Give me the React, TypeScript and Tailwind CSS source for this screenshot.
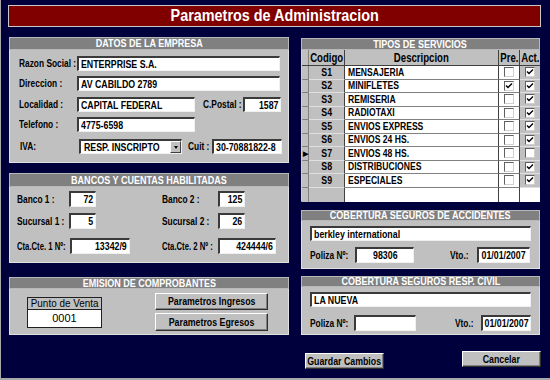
import React from "react";

const font = "font-['Liberation_Sans',Arial,sans-serif]";

// narrowed text: the original uses a condensed bold face
function T({
  children,
  o = "origin-left",
  s = "scale-x-[0.78]",
}: {
  children: React.ReactNode;
  o?: string;
  s?: string;
}) {
  return <span className={`inline-block whitespace-nowrap ${o} ${s}`}>{children}</span>;
}

function Header({ title, h }: { title: string; h: string }) {
  return (
    <div
      className={`${h} flex items-center justify-center overflow-hidden border border-[#b8b8b8] bg-[#808080] text-[11px] font-bold leading-none text-white`}
    >
      <T o="origin-center" s="scale-x-[0.82]">
        {title}
      </T>
    </div>
  );
}

function Field({
  w,
  value = "",
  align = "left",
  h = "h-[15px]",
}: {
  w: string;
  value?: string;
  align?: "left" | "right" | "center";
  h?: string;
}) {
  const cls = align === "left" ? "justify-start" : align === "right" ? "justify-end" : "justify-center";
  const o = align === "left" ? "origin-left" : align === "right" ? "origin-right" : "origin-center";
  return (
    <div
      className={`${w} ${h} ${cls} flex flex-none items-center overflow-hidden border-t-2 border-l-2 border-b border-r border-t-[#3a3a3a] border-l-[#3a3a3a] border-b-[#f0f0f0] border-r-[#f0f0f0] bg-white px-[2px] text-[11px] font-bold leading-none text-black`}
    >
      <T o={o} s="scale-x-[0.8]">
        {value}
      </T>
    </div>
  );
}

function Label({
  w,
  text,
  className = "",
  s = "scale-x-[0.76]",
}: {
  w: string;
  text: string;
  className?: string;
  s?: string;
}) {
  return (
    <div className={`${w} ${className} flex-none text-[11px] font-bold leading-none text-black`}>
      <T s={s}>{text}</T>
    </div>
  );
}

function Btn({ text, w, h }: { text: string; w: string; h: string }) {
  return (
    <div
      className={`${w} ${h} flex flex-none items-center justify-center border-t border-l border-t-white border-l-white border-b border-r border-b-[#303030] border-r-[#303030] bg-[#c0c0c0] text-[11px] font-bold leading-none text-black shadow-[inset_-1px_-1px_0_#808080]`}
    >
      <T o="origin-center" s="scale-x-[0.8]">
        {text}
      </T>
    </div>
  );
}

function Check({ on }: { on: boolean }) {
  return (
    <div className="flex h-[10px] w-[10px] items-center justify-center border-t border-l border-t-[#606060] border-l-[#606060] border-b border-r border-b-[#d0d0d0] border-r-[#d0d0d0] bg-white">
      {on && (
        <svg width="8" height="8" viewBox="0 0 8 8">
          <polyline points="1,3.5 3,5.5 7,1.5" fill="none" stroke="#000" strokeWidth="1.4" />
        </svg>
      )}
    </div>
  );
}

const servicios = [
  { c: "S1", d: "MENSAJERIA", pre: false, act: true },
  { c: "S2", d: "MINIFLETES", pre: true, act: true },
  { c: "S3", d: "REMISERIA", pre: false, act: true },
  { c: "S4", d: "RADIOTAXI", pre: false, act: true },
  { c: "S5", d: "ENVIOS EXPRESS", pre: false, act: true },
  { c: "S6", d: "ENVIOS 24 HS.", pre: false, act: true },
  { c: "S7", d: "ENVIOS 48 HS.", pre: false, act: false, sel: true },
  { c: "S8", d: "DISTRIBUCIONES", pre: false, act: true },
  { c: "S9", d: "ESPECIALES", pre: false, act: true },
];

function Grid() {
  return (
    <div className="h-[152px] w-[239px] border-l border-l-[#d0d0d0] border-b border-b-[#404040] bg-[#c0c0c0]">
      <div className="flex h-[16px] border-b border-[#404040] text-[12px] font-bold leading-none">
        <div className="w-[7px] flex-none border-r border-[#808080] bg-[#c0c0c0]" />
        <div className="flex w-[36px] flex-none items-center justify-center border-r border-[#404040]">
          <T o="origin-center" s="scale-x-[0.8]">Codigo</T>
        </div>
        <div className="flex w-[154px] flex-none items-center justify-center border-r border-[#404040]">
          <T o="origin-center" s="scale-x-[0.8]">Descripcion</T>
        </div>
        <div className="flex w-[21px] flex-none items-center justify-center border-r border-[#404040]">
          <T o="origin-center" s="scale-x-[0.8]">Pre.</T>
        </div>
        <div className="flex w-[20px] flex-none items-center justify-center">
          <T o="origin-center" s="scale-x-[0.8]">Act.</T>
        </div>
      </div>
      {servicios.map((s) => (
        <div key={s.c} className="flex h-[13.5px] text-[11px] font-bold leading-none">
          <div className="flex w-[7px] flex-none items-center justify-center border-r border-b border-[#808080] bg-[#c0c0c0] text-[7px]">
            {s.sel ? "▶" : ""}
          </div>
          <div className="flex w-[36px] flex-none items-center justify-center border-r border-r-[#404040] border-b border-b-[#e0e0e0] bg-[#c0c0c0]">
            <T o="origin-center" s="scale-x-[0.8]">{s.c}</T>
          </div>
          <div className="flex w-[154px] flex-none items-center border-r border-r-[#404040] border-b border-b-[#808080] bg-white pl-[3px]">
            <T s="scale-x-[0.78]">{s.d}</T>
          </div>
          <div className="flex w-[21px] flex-none items-center justify-center border-r border-r-[#404040] border-b border-b-[#808080] bg-white">
            <Check on={s.pre} />
          </div>
          <div className="flex w-[20px] flex-none items-center justify-center border-b border-b-[#e0e0e0] bg-[#c0c0c0]">
            <Check on={s.act} />
          </div>
        </div>
      ))}
      <div className="flex h-[14px]">
        <div className="w-[7px] flex-none border-r border-[#808080] bg-[#c0c0c0]" />
        <div className="w-[36px] flex-none border-r border-[#404040] bg-[#c0c0c0]" />
        <div className="w-[154px] flex-none border-r border-[#404040] bg-white" />
        <div className="w-[21px] flex-none border-r border-[#404040] bg-white" />
        <div className="w-[20px] flex-none bg-white" />
      </div>
    </div>
  );
}

export default function App() {
  return (
    <div className={`${font} flex h-[380px] w-[550px] flex-col border-l border-b-2 border-[#a8a8a8] bg-[#00003c]`}>
      <div className="ml-[7px] mt-[5px] flex h-[22px] w-[533px] items-center justify-center border border-[#c8c8c8] bg-[#800000] text-[16px] font-bold leading-none text-white">
        <T o="origin-center" s="scale-x-[0.9]">Parametros de Administracion</T>
      </div>

      <div className="mt-[10px] flex">
        {/* left column */}
        <div className="ml-[8px] flex w-[280px] flex-none flex-col">
          <Header title="DATOS DE LA EMPRESA" h="h-[13px]" />
          <div className="h-[113px] border border-[#e0e0e0] border-t-0 bg-[#c0c0c0] pl-[9px] pt-[6px]">
            <div className="flex items-center">
              <Label w="w-[58px]" text="Razon Social :" />
              <Field w="w-[203px]" value="ENTERPRISE S.A." />
            </div>
            <div className="mt-[5px] flex items-center">
              <Label w="w-[58px]" text="Direccion :" />
              <Field w="w-[203px]" value="AV CABILDO 2789" />
            </div>
            <div className="mt-[6px] flex items-center">
              <Label w="w-[58px]" text="Localidad :" />
              <Field w="w-[118px]" value="CAPITAL FEDERAL" />
              <Label w="w-[40px]" text="C.Postal :" className="ml-[8px]" />
              <Field w="w-[38px]" value="1587" align="right" />
            </div>
            <div className="mt-[5px] flex items-center">
              <Label w="w-[58px]" text="Telefono :" />
              <Field w="w-[118px]" value="4775-6598" />
            </div>
            <div className="mt-[7px] flex items-center">
              <Label w="w-[60px]" text="IVA:" className="pl-[1px]" />
              <div className="flex h-[15px] w-[103px] flex-none border-t-2 border-l-2 border-b border-r border-t-[#3a3a3a] border-l-[#3a3a3a] border-b-[#f0f0f0] border-r-[#f0f0f0] bg-white">
                <div className="flex flex-1 items-center overflow-hidden px-[3px] text-[11px] font-bold leading-none">
                  <T s="scale-x-[0.8]">RESP. INSCRIPTO</T>
                </div>
                <div className="flex w-[11px] items-center justify-center border-t border-l border-t-white border-l-white border-b border-r border-b-[#404040] border-r-[#404040] bg-[#c0c0c0]">
                  <div className="h-0 w-0 border-x-[2.5px] border-t-[3px] border-x-transparent border-t-black" />
                </div>
              </div>
              <Label w="w-[24px]" text="Cuit :" className="ml-[6px]" />
              <Field w="w-[70px]" value="30-70881822-8" />
            </div>
          </div>

          <div className="mt-[10px]">
            <Header title="BANCOS Y CUENTAS HABILITADAS" h="h-[14px]" />
          </div>
          <div className="h-[76px] border border-[#e0e0e0] border-t-0 bg-[#c0c0c0] pl-[7px] pt-[4px]">
            <div className="flex items-center">
              <div className="flex w-[145px] items-center">
                <Label w="w-[52px]" text="Banco  1 :" />
                <Field w="w-[27px]" h="h-[16px]" value="72" align="right" />
              </div>
              <Label w="w-[56px]" text="Banco 2 :" />
              <Field w="w-[27px]" h="h-[16px]" value="125" align="right" />
            </div>
            <div className="mt-[6px] flex items-center">
              <div className="flex w-[145px] items-center">
                <Label w="w-[52px]" text="Sucursal 1 :" />
                <Field w="w-[27px]" h="h-[16px]" value="5" align="right" />
              </div>
              <Label w="w-[56px]" text="Sucursal 2 :" />
              <Field w="w-[27px]" h="h-[16px]" value="26" align="right" />
            </div>
            <div className="mt-[9px] flex items-center">
              <div className="flex w-[145px] items-center">
                <Label w="w-[53px]" text="Cta.Cte. 1 Nº:" s="scale-x-[0.7]" />
                <Field w="w-[60px]" h="h-[16px]" value="13342/9" align="right" />
              </div>
              <Label w="w-[56px]" text="Cta.Cte. 2  Nº :" s="scale-x-[0.7]" />
              <Field w="w-[58px]" h="h-[16px]" value="424444/6" align="right" />
            </div>
          </div>

          <div className="mt-[14px]">
            <Header title="EMISION DE COMPROBANTES" h="h-[12px]" />
          </div>
          <div className="flex h-[46px] border border-[#e0e0e0] border-t-0 bg-[#c0c0c0] pl-[17px]">
            <div className="mt-[8px] flex h-[31px] w-[75px] flex-none flex-col border border-[#202020]">
              <div className="flex h-[12px] items-center justify-center border-b border-[#202020] bg-[#c0c0c0] text-[11px] leading-none">
                <T o="origin-center" s="scale-x-[0.9]">Punto de Venta</T>
              </div>
              <div className="flex flex-1 items-center justify-center bg-white text-[11px] leading-none">0001</div>
            </div>
            <div className="ml-[53px] flex flex-col gap-[3px] pt-[4px]">
              <Btn text="Parametros Ingresos" w="w-[113px]" h="h-[17px]" />
              <Btn text="Parametros Egresos" w="w-[113px]" h="h-[18px]" />
            </div>
          </div>
        </div>

        {/* right column */}
        <div className="ml-[12px] mt-[1px] flex w-[239px] flex-none flex-col">
          <Header title="TIPOS DE SERVICIOS" h="h-[12px]" />
          <Grid />

          <div className="mt-[8px]">
            <Header title="COBERTURA SEGUROS DE ACCIDENTES" h="h-[11px]" />
          </div>
          <div className="h-[48px] border border-[#e0e0e0] border-t-0 bg-[#c0c0c0] pl-[8px] pt-[5px]">
            <Field w="w-[221px]" value="berkley international" />
            <div className="mt-[6px] flex items-center">
              <Label w="w-[45px]" text="Poliza Nº:" />
              <Field w="w-[59px]" h="h-[16px]" value="98306" align="center" />
              <Label w="w-[27px]" text="Vto.:" className="ml-[36px]" />
              <Field w="w-[53px]" h="h-[16px]" value="01/01/2007" align="center" />
            </div>
          </div>

          <div className="mt-[7px]">
            <Header title="COBERTURA SEGUROS RESP. CIVIL" h="h-[11px]" />
          </div>
          <div className="h-[48px] border border-[#e0e0e0] border-t-0 bg-[#c0c0c0] pl-[8px] pt-[5px]">
            <Field w="w-[221px]" value="LA NUEVA" />
            <div className="mt-[8px] flex items-center">
              <Label w="w-[44px]" text="Poliza Nº:" />
              <Field w="w-[62px]" h="h-[16px]" />
              <Label w="w-[26px]" text="Vto.:" className="ml-[39px]" />
              <Field w="w-[50px]" h="h-[16px]" value="01/01/2007" align="center" />
            </div>
          </div>

          <div className="mt-[16px] flex items-start">
            <div className="ml-[4px] mt-[2px]">
              <Btn text="Guardar Cambios" w="w-[79px]" h="h-[16px]" />
            </div>
            <div className="ml-[78px]">
              <Btn text="Cancelar" w="w-[79px]" h="h-[16px]" />
            </div>
          </div>
        </div>
      </div>
    </div>
  );
}
